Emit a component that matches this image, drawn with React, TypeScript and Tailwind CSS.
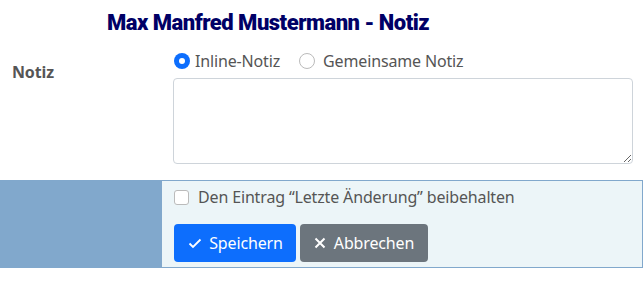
import React, { useState } from 'react';

const App: React.FC = () => {
    const [mode, setMode] = useState('inline');
    const [keep, setKeep] = useState(false);

    return (
        <div className="w-[644px] h-[284px] bg-white text-[#555] font-['Noto_Sans',sans-serif] tracking-[-0.15px]">
            <h1 className="pt-[7px] pl-[107px] font-['Roboto',sans-serif] text-[22px] leading-[32px] font-black tracking-[-0.5px] text-[#000066]">
                Max Manfred Mustermann - Notiz
            </h1>
            <div className="flex mt-[10px]">
                <label className="w-[173px] pl-[12px] pt-[11px] font-bold text-[16px] text-[#555]">Notiz</label>
                <div className="flex-1 pr-[11px]">
                    <div className="flex items-center h-[24px] text-[16px] text-[#555]">
                        <label className="flex items-center mr-[19px] pl-[1px]">
                            <span
                                onClick={() => setMode('inline')}
                                className={
                                    mode === 'inline'
                                        ? 'w-[16px] h-[16px] rounded-full bg-[#0d6efd] flex items-center justify-center mr-[5px]'
                                        : 'w-[16px] h-[16px] rounded-full border border-[#bbb] bg-white mr-[5px]'
                                }
                            >
                                {mode === 'inline' && <span className="w-[6px] h-[6px] rounded-full bg-white" />}
                            </span>
                            Inline-Notiz
                        </label>
                        <label className="flex items-center">
                            <span
                                onClick={() => setMode('shared')}
                                className={
                                    mode === 'shared'
                                        ? 'w-[16px] h-[16px] rounded-full bg-[#0d6efd] flex items-center justify-center mr-[8px]'
                                        : 'w-[16px] h-[16px] rounded-full border border-[#bbb] bg-white mr-[8px]'
                                }
                            >
                                {mode === 'shared' && <span className="w-[6px] h-[6px] rounded-full bg-white" />}
                            </span>
                            Gemeinsame Notiz
                        </label>
                    </div>
                    <textarea className="block w-full h-[86px] mt-[5px] border border-[#ced4da] rounded-[4px] bg-white outline-none" />
                </div>
            </div>
            <div className="flex mt-[16px] h-[88px]">
                <div className="w-[162px] bg-[#81a8cc]" />
                <div className="flex-1 mr-[1px] bg-[#ecf5f8] border border-l-0 border-[#81a8cc] pl-[12px] pt-[4px]">
                    <label className="flex items-center text-[16px] text-[#555] h-[24px]">
                        <span
                            onClick={() => setKeep(!keep)}
                            className="w-[15px] h-[15px] rounded-[3px] border border-[#bbb] bg-white mr-[9px]"
                        />
                        Den Eintrag “Letzte Änderung” beibehalten
                    </label>
                    <div className="flex gap-[4px] mt-[15px]">
                        <button className="h-[38px] w-[122px] rounded-[4px] bg-[#0d6efd] text-white text-[16px] flex items-center justify-center gap-[6px]">
                            <svg width="16" height="16" viewBox="0 0 16 16" fill="none" stroke="currentColor" strokeWidth="1.8">
                                <path d="M2.5 8.5l3.5 3.5 7.5-7.5" />
                            </svg>
                            Speichern
                        </button>
                        <button className="h-[38px] w-[128px] rounded-[4px] bg-[#6c757d] text-white text-[16px] flex items-center justify-center gap-[8px]">
                            <svg width="12" height="12" viewBox="0 0 12 12" fill="none" stroke="currentColor" strokeWidth="2">
                                <path d="M1.5 1.5l9 9M10.5 1.5l-9 9" />
                            </svg>
                            Abbrechen
                        </button>
                    </div>
                </div>
            </div>
        </div>
    );
};

export default App;
